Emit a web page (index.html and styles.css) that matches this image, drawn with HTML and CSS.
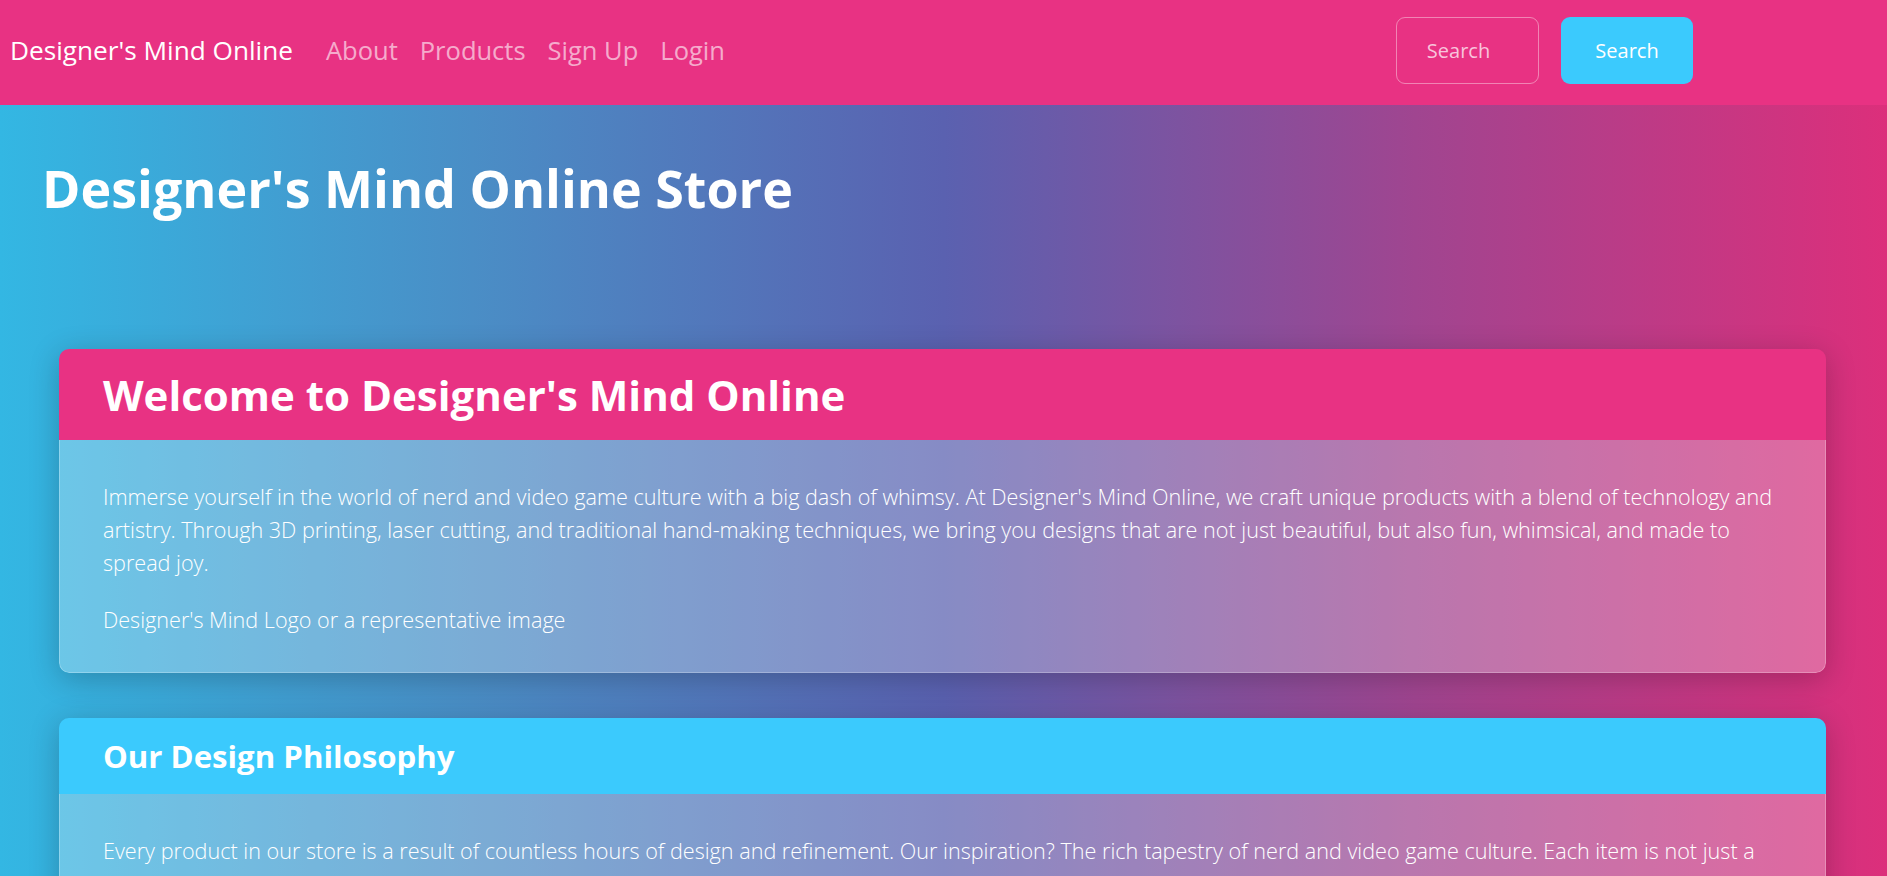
FILE: index.html
```html
<!DOCTYPE html>
<html lang="en">
<head>
<meta charset="utf-8">
<title>Designer's Mind Online</title>
<link rel="stylesheet" href="styles.css">
</head>
<body>
<nav class="navbar">
  <a class="brand" href="#">Designer's Mind Online</a>
  <ul class="nav-links">
    <li><a href="#">About</a></li>
    <li><a href="#">Products</a></li>
    <li><a href="#">Sign Up</a></li>
    <li><a href="#">Login</a></li>
  </ul>
  <form class="search">
    <input class="search-input" type="search" placeholder="Search">
    <button class="search-btn" type="button">Search</button>
  </form>
</nav>
<main class="page">
  <h1 class="page-title">Designer's Mind Online Store</h1>
  <section class="cards">
    <article class="card">
      <header class="card-header pink"><h2>Welcome to Designer's Mind Online</h2></header>
      <div class="card-body">
        <p>Immerse yourself in the world of nerd and video game culture with a big dash of whimsy. At Designer's Mind Online, we craft unique products with a blend of technology and artistry. Through 3D printing, laser cutting, and traditional hand-making techniques, we bring you designs that are not just beautiful, but also fun, whimsical, and made to spread joy.</p>
        <p>Designer's Mind Logo or a representative image</p>
      </div>
    </article>
    <article class="card">
      <header class="card-header cyan"><h4>Our Design Philosophy</h4></header>
      <div class="card-body">
        <p>Every product in our store is a result of countless hours of design and refinement. Our inspiration? The rich tapestry of nerd and video game culture. Each item is not just a product, but a conversation starter and a celebration of the things we love.</p>
      </div>
    </article>
  </section>
</main>
</body>
</html>
```

FILE: styles.css
```css
* { box-sizing: border-box; }
html, body { margin: 0; padding: 0; }
body {
  font-family: "Open Sans", "Noto Sans", sans-serif;
  font-size: 21.6px;
  line-height: 33px;
  color: #fff;
  min-height: 100vh;
  background: linear-gradient(to right, #33b7e3 0%, #4a8ec6 25%, #5a61b0 50%, #a04590 75%, #dc2f7b 100%);
}
.navbar {
  height: 105px;
  background: #e83283;
  display: flex;
  align-items: center;
  padding: 0 10px 5px;
}
.brand {
  color: #fff;
  text-decoration: none;
  font-size: 26.2px;
  margin-right: 22px;
}
.nav-links {
  list-style: none;
  margin: 0;
  padding: 0;
  display: flex;
}
.nav-links a {
  display: block;
  padding: 0 11px;
  color: rgba(255, 255, 255, 0.6);
  text-decoration: none;
  font-size: 25.5px;
}
.search {
  margin-left: auto;
  margin-right: 184px;
  display: flex;
  gap: 22px;
}
.search-input {
  width: 143px;
  height: 67px;
  border: 1px solid rgba(255, 255, 255, 0.4);
  border-radius: 9px;
  background: transparent;
  color: #fff;
  font: inherit;
  font-size: 20px;
  text-align: center;
  padding: 0 20px;
}
.search-input::placeholder { color: rgba(255, 255, 255, 0.72); }
.search-btn {
  width: 132px;
  height: 67px;
  border: 0;
  border-radius: 9px;
  background: #3bcafd;
  color: #fff;
  font: inherit;
  font-size: 20px;
}
.page { padding: 0 61px 40px 59px; }
.page-title {
  margin: 0 0 0 -17px;
  padding: 52px 0 0;
  font-size: 52px;
  font-weight: 700;
  line-height: 1.2;
  height: 244px;
}
.cards { display: flex; flex-direction: column; gap: 45px; }
.card {
  border-radius: 10px;
  overflow: hidden;
  box-shadow: 0 6px 30px rgba(0, 0, 0, 0.22);
}
.card-header { padding: 2px 44px 0; display: flex; align-items: center; }
.card-header.pink { background: #e83283; height: 91px; }
.card-header.cyan { background: #3bcafd; height: 76px; }
.card-header h2 { margin: 0; font-size: 42px; font-weight: 700; line-height: 1.2; }
.card-header h4 { margin: 0; font-size: 31.2px; font-weight: 700; line-height: 1.2; }
.card-body {
  background: rgba(255, 255, 255, 0.27);
  border: 1px solid rgba(255, 255, 255, 0.25);
  border-top: 0;
  border-radius: 0 0 10px 10px;
  padding: 40px 43px 12px;
}
.card-body p { margin: 0 0 24px; font-weight: 300; }
```
